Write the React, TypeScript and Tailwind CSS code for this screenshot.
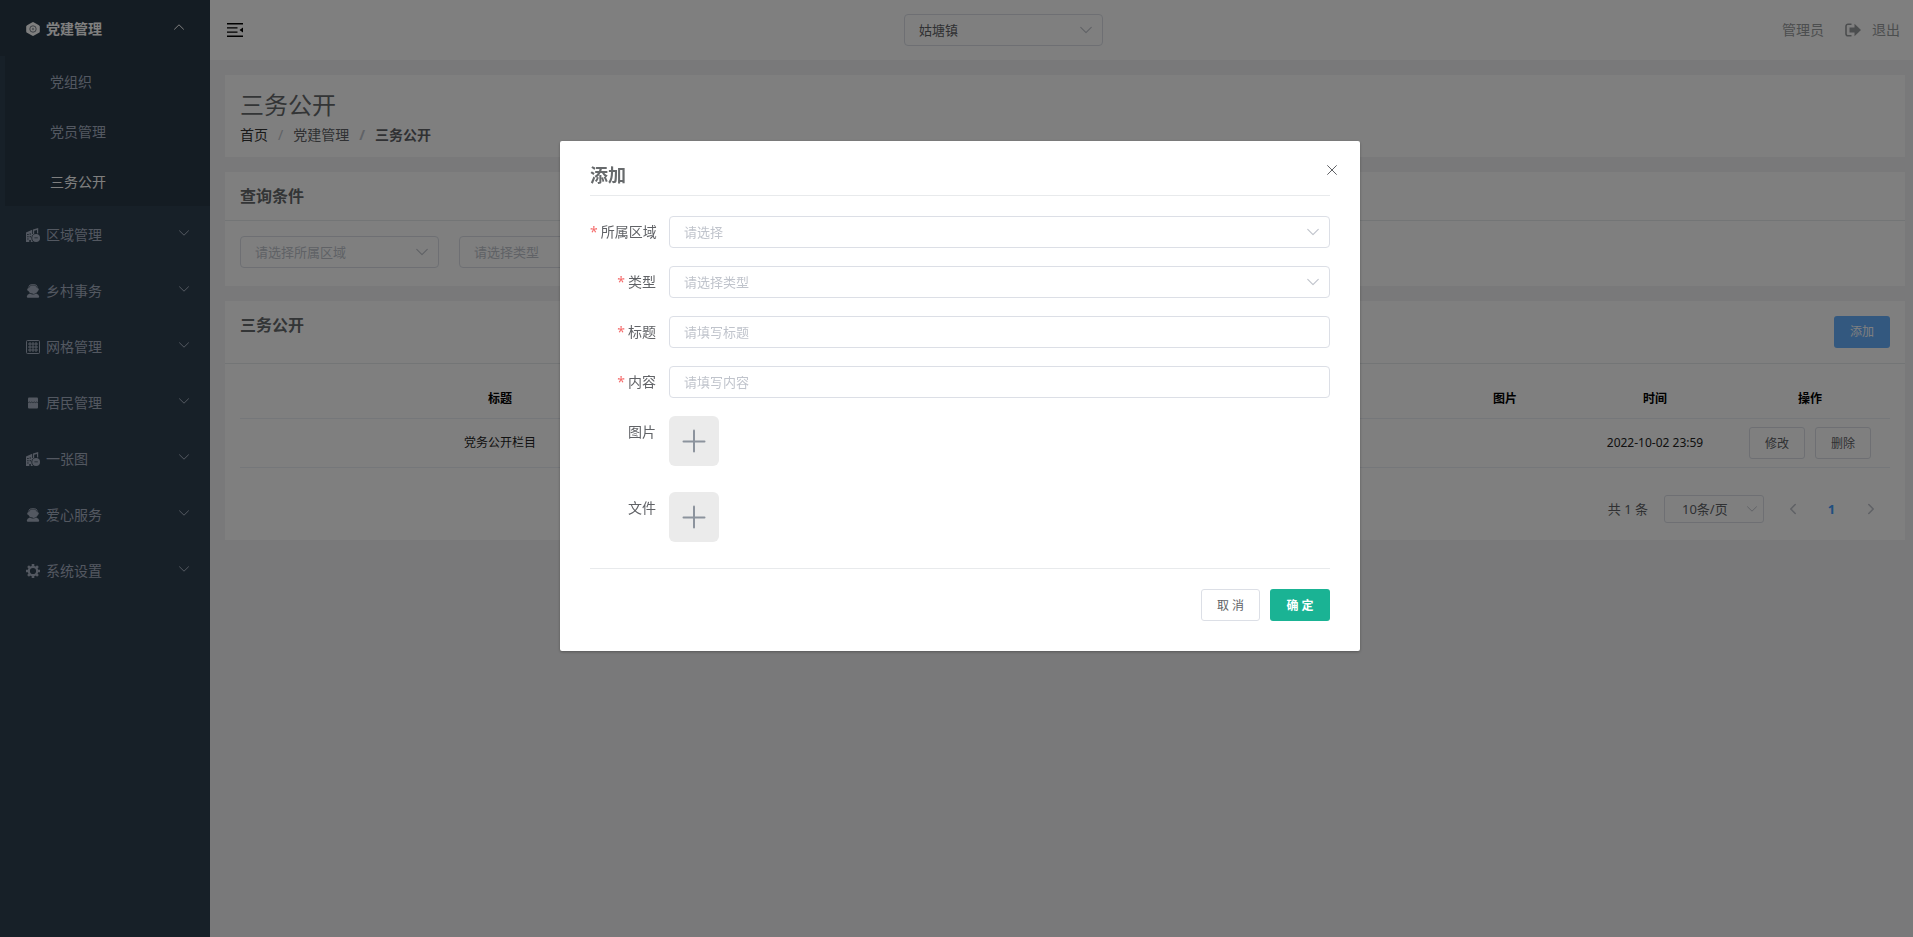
import { ReactNode, useState } from "react";
import clsx from "clsx";

type IconProps = { className?: string };

type MenuItem = {
  label: string;
  icon: (props: IconProps) => ReactNode;
};

const subMenu = ["党组织", "党员管理", "三务公开"];

const menu: MenuItem[] = [
  { label: "区域管理", icon: BuildingIcon },
  { label: "乡村事务", icon: ServiceIcon },
  { label: "网格管理", icon: GridIcon },
  { label: "居民管理", icon: ShopIcon },
  { label: "一张图", icon: BuildingIcon },
  { label: "爱心服务", icon: ServiceIcon },
  { label: "系统设置", icon: GearIcon },
];

export default function App() {
  const [open, setOpen] = useState(true);

  return (
    <div className="flex min-h-screen bg-[#f3f3f4] font-['Noto_Sans','Noto_Sans_CJK_SC',sans-serif] text-sm text-[#606266]">
      <Sidebar />
      <div className="flex min-w-0 flex-1 flex-col">
        <Header />
        <main className="flex flex-col gap-[15px] pt-[15px] pr-2 pl-[15px]">
          <PageTitle />
          <SearchCard />
          <ListCard onAdd={() => setOpen(true)} />
        </main>
      </div>
      {open && <AddDialog onClose={() => setOpen(false)} />}
    </div>
  );
}

function Sidebar() {
  return (
    <nav className="w-[210px] shrink-0 bg-[#2f4050] text-[#a7b1c2]">
      <a
        href="#party"
        className="flex h-14 items-center bg-[#293846] pt-0.5 pr-[25px] pl-[26px] font-bold text-white"
      >
        <HexagonIcon className="mr-1.5 size-3.5" />
        <span className="flex-1">党建管理</span>
        <Chevron className="mb-1 size-3 rotate-180" />
      </a>
      <ul className="ml-[5px] bg-[#293846]">
        {subMenu.map((label) => (
          <li key={label}>
            <a
              href="#sub"
              className={clsx(
                "flex h-[50px] items-center pt-0.5 pl-[45px]",
                label === "三务公开" && "text-white",
              )}
            >
              {label}
            </a>
          </li>
        ))}
      </ul>
      {menu.map(({ label, icon: Icon }) => (
        <a
          key={label}
          href="#menu"
          className="flex h-14 items-center pt-0.5 pr-5 pl-[26px]"
        >
          <Icon className="mr-1.5 size-3.5" />
          <span className="flex-1">{label}</span>
          <Chevron className="mb-1 size-3" />
        </a>
      ))}
    </nav>
  );
}

function Header() {
  return (
    <header className="flex h-[60px] items-center justify-between bg-white pr-[13px] pl-[17px]">
      <button type="button" aria-label="收起菜单" className="text-black">
        <FoldIcon className="h-3.5 w-4" />
      </button>
      <Select label="姑塘镇" className="w-[199px] text-[#606266]" />
      <div className="flex items-center pl-[18px] text-[#999c9e]">
        <span>管理员</span>
        <a href="#logout" className="ml-[21px] flex items-center">
          <LogoutIcon className="mr-[11px] h-3.5 w-4" />
          退出
        </a>
      </div>
    </header>
  );
}

function PageTitle() {
  return (
    <section className="bg-white px-[15px] pt-[15px] pb-3">
      <h1 className="text-2xl leading-[30px] text-[#676a6c]">三务公开</h1>
      <ol className="mt-[5px] flex leading-5">
        <li>
          <a href="#home" className="text-[#333]">
            首页
          </a>
        </li>
        <li className="before:mx-2.5 before:text-[#c0c4cc] before:content-['/']">
          党建管理
        </li>
        <li className="font-bold before:mx-2.5 before:text-[#c0c4cc] before:content-['/']">
          三务公开
        </li>
      </ol>
    </section>
  );
}

function SearchCard() {
  return (
    <section className="bg-white">
      <h2 className="border-b border-[#e7eaec] p-3.5 pl-[15px] text-base leading-5 font-bold text-[#676a6c]">
        查询条件
      </h2>
      <div className="flex gap-5 px-[15px] pt-[15px] pb-[18px]">
        <Select
          label="请选择所属区域"
          className="w-[199px] text-[#c0c4cc]"
        />
        <Select label="请选择类型" className="w-[199px] text-[#c0c4cc]" />
      </div>
    </section>
  );
}

function ListCard({ onAdd }: { onAdd: () => void }) {
  return (
    <section className="bg-white">
      <div className="flex justify-between border-b border-[#e7eaec] p-[15px]">
        <h2 className="text-base leading-[18px] font-bold text-[#676a6c]">
          三务公开
        </h2>
        <button
          type="button"
          onClick={onAdd}
          className="h-8 w-14 rounded-[3px] bg-[#66b1ff] text-xs text-white"
        >
          添加
        </button>
      </div>

      <div className="px-[15px] pt-[15px] pb-[17px]">
        <table className="w-full table-fixed border-separate border-spacing-0 text-center text-xs text-[#222]">
          <colgroup>
            <col />
            <col className="w-[150px]" />
            <col />
            <col className="w-[150px]" />
            <col className="w-[150px]" />
            <col className="w-[160px]" />
          </colgroup>
          <thead>
            <tr className="h-10 text-black">
              <th className="border-b border-[#ebeef5]">标题</th>
              <th className="border-b border-[#ebeef5]" />
              <th className="border-b border-[#ebeef5]" />
              <th className="border-b border-[#ebeef5]">图片</th>
              <th className="border-b border-[#ebeef5]">时间</th>
              <th className="border-b border-[#ebeef5]">操作</th>
            </tr>
          </thead>
          <tbody>
            <tr className="h-[49px]">
              <td className="border-b border-[#ebeef5]">党务公开栏目</td>
              <td className="border-b border-[#ebeef5]" />
              <td className="border-b border-[#ebeef5]" />
              <td className="border-b border-[#ebeef5]" />
              <td className="border-b border-[#ebeef5]">2022-10-02 23:59</td>
              <td className="border-b border-[#ebeef5]">
                <div className="flex justify-center gap-2.5 text-[#606266]">
                  <RowButton>修改</RowButton>
                  <RowButton>删除</RowButton>
                </div>
              </td>
            </tr>
          </tbody>
        </table>

        {/* Pagination */}
        <div className="flex items-center justify-end pt-[27px] text-[13px]">
          <span className="mr-4">共 1 条</span>
          <div className="relative mr-3.5 w-[100px]">
            <select
              aria-label="每页条数"
              className="h-7 w-full appearance-none rounded-[3px] border border-[#dcdfe6] bg-white pl-[17px] outline-none"
            >
              <option>10条/页</option>
            </select>
            <Chevron className="pointer-events-none absolute top-2 right-1.5 size-3 text-[#c0c4cc]" />
          </div>
          <button
            type="button"
            aria-label="上一页"
            className="flex h-7 w-[29px] items-center justify-center text-[#c0c4cc]"
          >
            <Chevron className="size-3 rotate-90" strokeWidth={1.6} />
          </button>
          <button
            type="button"
            className="mx-2.5 h-7 w-[29px] font-bold text-[#409eff]"
          >
            1
          </button>
          <button
            type="button"
            aria-label="下一页"
            className="mr-[5px] flex h-7 w-[29px] items-center justify-center text-[#c0c4cc]"
          >
            <Chevron className="size-3 -rotate-90" strokeWidth={1.6} />
          </button>
        </div>
      </div>
    </section>
  );
}

function RowButton({ children }: { children: ReactNode }) {
  return (
    <button
      type="button"
      className="h-8 w-14 rounded-[3px] border border-[#dcdfe6] bg-white pt-px"
    >
      {children}
    </button>
  );
}

function AddDialog({ onClose }: { onClose: () => void }) {
  return (
    <div className="fixed inset-0 flex items-start justify-center bg-black/50 pt-[141px] pl-[7px]">
      <form
        role="dialog"
        aria-labelledby="dialog-title"
        className="relative w-[800px] rounded-xs bg-white px-[30px] pt-[22px] pb-[30px] shadow-[0_1px_3px_rgba(0,0,0,0.3)]"
      >
        <h2
          id="dialog-title"
          className="border-b border-[#e8eaec] pb-2 text-lg leading-6 font-bold text-[#676a6c]"
        >
          添加
        </h2>
        <button
          type="button"
          aria-label="关闭"
          onClick={onClose}
          className="absolute top-6 right-[23px] text-[#606266]"
        >
          <CloseIcon className="size-2.5" />
        </button>

        <div className="flex flex-col gap-[18px] pt-5">
          <Field id="area" label="所属区域" required>
            <Select id="area" label="请选择" className="w-full text-[#c0c4cc]" />
          </Field>
          <Field id="type" label="类型" required>
            <Select
              id="type"
              label="请选择类型"
              className="w-full text-[#c0c4cc]"
            />
          </Field>
          <Field id="title" label="标题" required>
            <TextInput id="title" placeholder="请填写标题" />
          </Field>
          <Field id="content" label="内容" required>
            <TextInput id="content" placeholder="请填写内容" />
          </Field>
          <Field id="image" label="图片">
            <UploadButton id="image" />
          </Field>
          <Field id="file" label="文件">
            <UploadButton id="file" />
          </Field>
        </div>

        <div className="mt-[18px] flex justify-end gap-2.5 border-t border-[#e8eaec] pt-5 text-xs">
          <button
            type="button"
            onClick={onClose}
            className="h-8 w-[59px] rounded-[3px] border border-[#dcdfe6] bg-white pt-0.5"
          >
            取 消
          </button>
          <button
            type="button"
            className="h-8 w-[60px] rounded-[3px] bg-[#1ab394] pt-0.5 font-bold text-white"
          >
            确 定
          </button>
        </div>
      </form>
    </div>
  );
}

type FieldProps = {
  id: string;
  label: string;
  required?: boolean;
  children: ReactNode;
};

function Field({ id, label, required, children }: FieldProps) {
  return (
    <div className="flex items-start">
      <label
        htmlFor={id}
        className="w-[79px] shrink-0 pr-[13px] text-right leading-8 whitespace-nowrap"
      >
        {required && <span className="mr-[3px] text-[#f56c6c]">*</span>}
        {label}
      </label>
      <div className="min-w-0 flex-1">{children}</div>
    </div>
  );
}

function Select({
  id,
  label,
  className,
}: {
  id?: string;
  label: string;
  className?: string;
}) {
  return (
    <div className={clsx("relative", className)}>
      <select
        id={id}
        aria-label={label}
        className="block h-8 w-full appearance-none rounded border border-[#dcdfe6] bg-white px-3.5 text-[13px] outline-none"
      >
        <option>{label}</option>
      </select>
      <Chevron className="pointer-events-none absolute top-[9px] right-2.5 size-3.5 text-[#c0c4cc]" />
    </div>
  );
}

function TextInput({ id, placeholder }: { id: string; placeholder: string }) {
  return (
    <input
      id={id}
      type="text"
      placeholder={placeholder}
      className="block h-8 w-full rounded border border-[#dcdfe6] px-3.5 text-[13px] outline-none placeholder:text-[#c0c4cc]"
    />
  );
}

function UploadButton({ id }: { id: string }) {
  return (
    <button
      id={id}
      type="button"
      className="mb-2 flex size-[50px] items-center justify-center rounded-md bg-[#ebebeb] text-[#8c939d]"
    >
      <svg viewBox="0 0 24 24" className="size-6" fill="currentColor">
        <rect x="11" y="0.5" width="2" height="23" rx="1" />
        <rect x="0.5" y="11.500" width="23" height="2" rx="1" />
      </svg>
    </button>
  );
}

/* Icons */

function Chevron({
  className,
  strokeWidth = 1,
}: IconProps & { strokeWidth?: number }) {
  return (
    <svg
      viewBox="0 0 12 12"
      className={className}
      fill="none"
      stroke="currentColor"
      strokeWidth={strokeWidth}
      strokeLinecap="round"
      strokeLinejoin="round"
    >
      <path d="M1.5 3.8 6 8.2l4.500-4.400" />
    </svg>
  );
}

function CloseIcon({ className }: IconProps) {
  return (
    <svg viewBox="0 0 10 10" className={className} stroke="currentColor">
      <path d="M.3.3l9.400 9.400M9.700.3.3 9.700" />
    </svg>
  );
}

function FoldIcon({ className }: IconProps) {
  return (
    <svg viewBox="0 0 16 14" className={className} fill="currentColor">
      <path d="M0 0h16v1.400H0zM0 4.200h10.500v1.300H0zM0 8.400h10.500v1.300H0zM0 12.600h16V14H0zM16 4.600v4.800L12.500 7z" />
    </svg>
  );
}

function LogoutIcon({ className }: IconProps) {
  return (
    <svg viewBox="0 0 16 14" className={className}>
      <path
        d="M6.500 1.200H3A2 2 0 0 0 1 3.200v7.600a2 2 0 0 0 2 2h3.500"
        fill="none"
        stroke="currentColor"
        strokeWidth="1.600"
      />
      <path
        d="M4.500 4.500h5V.8L16 7l-6.500 6.200V9.500h-5z"
        fill="currentColor"
      />
    </svg>
  );
}

function HexagonIcon({ className }: IconProps) {
  return (
    <svg viewBox="0 0 14 14" className={className}>
      <path
        d="M7 0l1.500.8 4 2.100q1.300.7 1.300 1.700v4.800q0 1-1.300 1.700l-4 2.100L7 14l-1.500-.8-4-2.100Q.2 10.400.2 9.400V4.600q0-1 1.300-1.700l4-2.100z"
        fill="currentColor"
      />
      <circle
        cx="7"
        cy="7"
        r="3.200"
        fill="none"
        stroke="#293846"
        strokeOpacity="0.700"
        strokeWidth="0.900"
      />
      <circle cx="7" cy="7" r="1.200" fill="#293846" fillOpacity="0.400" />
    </svg>
  );
}

function BuildingIcon({ className }: IconProps) {
  return (
    <svg viewBox="0 0 14 14" className={className} fill="currentColor">
      <path
        fillRule="evenodd"
        d="M0 4.500 6.200 1.800V6h1.300A5 5 0 0 0 7 13.900H4.800V12H3.300v1.900H0zM1.200 6v1h1.400V6zM3.600 5.400v1H5v-1zM1.200 8.300v1h1.400v-1zM3.600 8.300v1H5v-1zM1.200 10.500v1h1.400v-1z"
      />
      <path d="M7 1.600 12.200 0v5.600a5 5 0 0 0-1.200-.4V1.900L8.200 2.700v3L7 6.500z" />
      <path
        fillRule="evenodd"
        d="M10.100 6.100a3.900 3.900 0 1 1 0 7.800 3.900 3.900 0 0 1 0-7.800zM8.400 9.500v.8h3.400v-.8z"
      />
    </svg>
  );
}

function ServiceIcon({ className }: IconProps) {
  return (
    <svg viewBox="0 0 14 14" className={className} fill="currentColor">
      <path d="M7 0a5 5 0 0 1 5 4.200c.6.2.8.600.8 1.300s-.2 1.100-.8 1.300C11.400 8.800 9.400 10 7 10l-.3-.6A4.300 4.300 0 0 1 2.400 6.900c-.8-.1-1.200-.7-1.200-1.400s.3-1.100.8-1.300A5 5 0 0 1 7 0z" />
      <path d="M3.800 9.400Q7 11.600 10.200 9.400q2.800.8 3 3.100.1 1.300-1.200 1.300H2q-1.300 0-1.200-1.300.2-2.300 3-3.100z" />
      <path
        d="M2.600 4.200C3 2.200 4.800 1.100 7 1.100s4 1.100 4.400 3.100"
        fill="none"
        stroke="#2f4050"
        strokeWidth="0.600"
      />
    </svg>
  );
}

function GridIcon({ className }: IconProps) {
  return (
    <svg
      viewBox="0 0 14 14"
      className={className}
      fill="none"
      stroke="currentColor"
    >
      <rect x="0.500" y="0.500" width="13" height="13" rx="1" />
      <path d="M4 2v10M7 2v10M10 2v10M2 4h10M2 7h10M2 10h10" />
    </svg>
  );
}

function ShopIcon({ className }: IconProps) {
  return (
    <svg viewBox="0 0 14 14" className={className}>
      <rect
        x="2"
        y="1.500"
        width="10"
        height="11"
        rx="1"
        fill="currentColor"
      />
      <path
        d="M2 6q.8 1.200 1.700 0 .8 1.200 1.600 0Q6.200 7.200 7 6q.8 1.200 1.700 0 .8 1.200 1.600 0 .9 1.200 1.700 0"
        fill="none"
        stroke="#2f4050"
        strokeWidth="0.700"
      />
    </svg>
  );
}

function GearIcon({ className }: IconProps) {
  return (
    <svg viewBox="0 0 14 14" className={className}>
      <circle
        cx="7"
        cy="7"
        r="4.200"
        fill="none"
        stroke="currentColor"
        strokeWidth="2.200"
      />
      <path
        d="M7 0v2.500M7 11.500V14M0 7h2.500M11.500 7H14M2.050 2.050l1.800 1.800M10.150 10.150l1.800 1.800M2.050 11.950l1.800-1.800M10.150 3.850l1.800-1.800"
        stroke="currentColor"
        strokeWidth="2.600"
      />
    </svg>
  );
}
